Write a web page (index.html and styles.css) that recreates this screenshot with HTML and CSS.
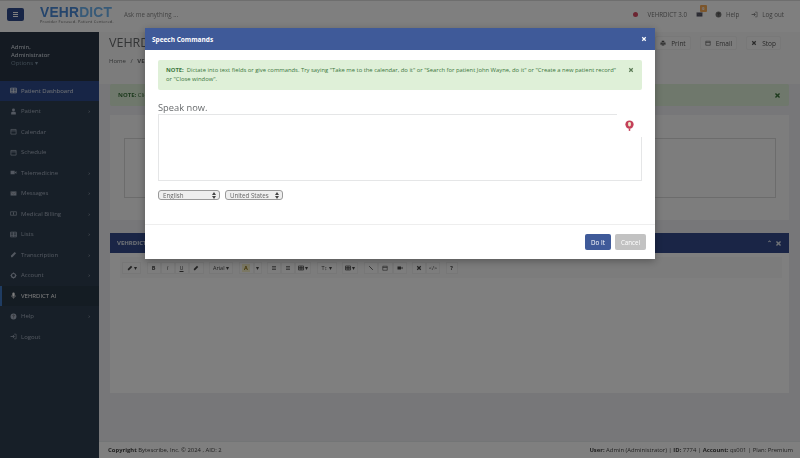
FILE: index.html
```html
<!DOCTYPE html>
<html lang="en">
<head>
  <meta charset="UTF-8">
  <meta name="viewport" content="width=device-width, initial-scale=1.0">
  <title>VEHRDICT</title>
  <link rel="stylesheet" href="styles.css">
</head>
<body>
  <svg class="defs" width="0" height="0">
    <symbol id="i-grid" viewBox="0 0 12 12"><path d="M1 2h10v8H1zM1 5h10M1 7.500h10M6 2v8" fill="none" stroke="currentColor" stroke-width="1.400"/></symbol>
    <symbol id="i-list" viewBox="0 0 12 12"><path d="M2 3h8M2 6h8M2 9h8" fill="none" stroke="currentColor" stroke-width="1.300"/></symbol>
    <symbol id="i-user" viewBox="0 0 12 12"><circle cx="6" cy="3.500" r="2.500" fill="currentColor"/><path d="M2 11V8.500Q2 6.500 4 6.500h4q2 0 2 2V11z" fill="currentColor"/></symbol>
    <symbol id="i-cal" viewBox="0 0 12 12"><path d="M1.500 2.500h9v8h-9zM1.500 5h9" fill="none" stroke="currentColor" stroke-width="1.200"/></symbol>
    <symbol id="i-video" viewBox="0 0 12 12"><path d="M1 3h7v6H1zM8.500 5.500 11 3.500v5L8.500 6.500z" fill="currentColor"/></symbol>
    <symbol id="i-mail" viewBox="0 0 12 12"><path d="M1 2.500h10v7H1z" fill="currentColor"/><path d="M1 3.500 6 7l5-3.500" fill="none" stroke="#777" stroke-width=".8"/></symbol>
    <symbol id="i-bill" viewBox="0 0 12 12"><path d="M1 3h10v6H1z" fill="none" stroke="currentColor" stroke-width="1.200"/><path d="M6 4v4" stroke="currentColor" stroke-width="1.600"/></symbol>
    <symbol id="i-pen" viewBox="0 0 12 12"><path d="M2 10.500 1.500 8 8 1.500 10.500 4 4 10.500z" fill="currentColor"/></symbol>
    <symbol id="i-link" viewBox="0 0 12 12"><path d="M2.500 2.500 5 5M7 7l2.500 2.500M4.500 4.500l3 3" fill="none" stroke="currentColor" stroke-width="1.800"/></symbol>
    <symbol id="i-gear" viewBox="0 0 12 12"><circle cx="6" cy="6" r="3.500" fill="none" stroke="currentColor" stroke-width="2"/><path d="M6 .8v2M6 9.200v2M.8 6h2M9.200 6h2" stroke="currentColor" stroke-width="1.400"/></symbol>
    <symbol id="i-mic" viewBox="0 0 12 12"><rect x="4" y="1" width="4" height="7" rx="2" fill="currentColor"/><path d="M2.500 6q0 3.300 3.500 3.300T9.500 6M6 9.300V11.500" fill="none" stroke="currentColor"/></symbol>
    <symbol id="i-help" viewBox="0 0 12 12"><circle cx="6" cy="6" r="5" fill="currentColor"/><path d="M4.500 4.800Q4.700 3.500 6 3.500t1.500 1.200Q7.500 5.500 6 6.300v.7M6 8v1" fill="none" stroke="#333" stroke-width="1"/></symbol>
    <symbol id="i-logout" viewBox="0 0 12 12"><path d="M1 6h6M5 3.500 7.500 6 5 8.500" fill="none" stroke="currentColor" stroke-width="1.400"/><path d="M7 2h3.500v8H7" fill="none" stroke="currentColor"/></symbol>
    <symbol id="i-x" viewBox="0 0 12 12"><path d="M2.500 2.500l7 7M9.500 2.500l-7 7" stroke="currentColor" stroke-width="2.400"/></symbol>
    <symbol id="i-print" viewBox="0 0 12 12"><path d="M1 5h10v4.500H9V7.500H3v2H1zM3.500 1.500h5V4h-5zM3.500 8.500h5V11h-5z" fill="currentColor"/></symbol>
  </svg>

  <header class="topbar">
    <button class="menu-btn"><span></span><span></span><span></span></button>
    <div class="logo">
      <div class="logo-name">VEHR<span>DICT</span></div>
      <div class="logo-tag">Provider Focused. Patient Centered.</div>
    </div>
    <div class="ask">Ask me anything ...</div>
    <nav class="top-links">
      <span class="dot"></span>
      <span class="top-link version">VEHRDICT 3.0</span>
      <span class="top-link mail"><svg class="ico"><use href="#i-mail"/></svg><b class="badge">0</b></span>
      <span class="top-link"><svg class="ico"><use href="#i-help"/></svg>Help</span>
      <span class="top-link"><svg class="ico"><use href="#i-logout"/></svg>Log out</span>
    </nav>
  </header>

  <div class="page">
    <aside class="sidebar">
      <div class="profile">
        <div>Admin,</div>
        <div>Administrator</div>
        <div class="options">Options ▾</div>
      </div>
      <ul class="nav">
        <li class="active"><svg class="ico"><use href="#i-grid"/></svg>Patient Dashboard</li>
        <li class="more"><svg class="ico"><use href="#i-user"/></svg>Patient</li>
        <li><svg class="ico"><use href="#i-cal"/></svg>Calendar</li>
        <li><svg class="ico"><use href="#i-cal"/></svg>Schedule</li>
        <li class="more"><svg class="ico"><use href="#i-video"/></svg>Telemedicine</li>
        <li class="more"><svg class="ico"><use href="#i-mail"/></svg>Messages</li>
        <li class="more"><svg class="ico"><use href="#i-bill"/></svg>Medical Billing</li>
        <li class="more"><svg class="ico"><use href="#i-grid"/></svg>Lists</li>
        <li class="more"><svg class="ico"><use href="#i-pen"/></svg>Transcription</li>
        <li class="more"><svg class="ico"><use href="#i-gear"/></svg>Account</li>
        <li class="current"><svg class="ico"><use href="#i-mic"/></svg>VEHRDICT AI</li>
        <li class="more"><svg class="ico"><use href="#i-help"/></svg>Help</li>
        <li><svg class="ico"><use href="#i-logout"/></svg>Logout</li>
      </ul>
    </aside>

    <main class="main">
      <section class="page-head">
        <div>
          <h1>VEHRDICT AI</h1>
          <div class="crumbs">Home <i>/</i> <b>VEHRDICT AI</b></div>
        </div>
        <div class="head-btns">
          <button><svg class="ico"><use href="#i-print"/></svg>Print</button>
          <button><svg class="ico"><use href="#i-cal"/></svg>Email</button>
          <button><svg class="ico"><use href="#i-x"/></svg>Stop</button>
        </div>
      </section>

      <div class="content">
        <div class="page-alert"><span><b>NOTE:</b> Click the microphone to begin.</span><svg class="ico"><use href="#i-x"/></svg></div>
        <div class="dict-box"><div class="dict-area"></div></div>

        <section class="panel">
          <div class="panel-head"><span>VEHRDICT AI</span><span class="panel-tools">⌃ <svg class="ico"><use href="#i-x"/></svg></span></div>
          <div class="panel-body">
            <div class="toolbar">
              <span class="tool t-19"><svg class="ico"><use href="#i-pen"/></svg>▾</span>
              <span class="tool-group">
                <span class="tool"><b>B</b></span><span class="tool"><i>I</i></span><span class="tool"><u>U</u></span><span class="tool t-15"><svg class="ico"><use href="#i-pen"/></svg></span>
              </span>
              <span class="tool t-24">Arial ▾</span>
              <span class="tool-group">
                <span class="tool color t-15"><b>A</b></span><span class="tool t-8">▾</span>
              </span>
              <span class="tool-group">
                <span class="tool"><svg class="ico"><use href="#i-list"/></svg></span><span class="tool"><svg class="ico"><use href="#i-list"/></svg></span><span class="tool t-16"><svg class="ico"><use href="#i-grid"/></svg>▾</span>
              </span>
              <span class="tool t-20">T↕ ▾</span>
              <span class="tool t-16"><svg class="ico"><use href="#i-grid"/></svg>▾</span>
              <span class="tool-group">
                <span class="tool"><svg class="ico"><use href="#i-link"/></svg></span><span class="tool t-15"><svg class="ico"><use href="#i-cal"/></svg></span><span class="tool"><svg class="ico"><use href="#i-video"/></svg></span>
              </span>
              <span class="tool-group">
                <span class="tool"><svg class="ico"><use href="#i-x"/></svg></span><span class="tool">&lt;/&gt;</span>
              </span>
              <span class="tool t-12"><b>?</b></span>
            </div>
          </div>
        </section>
      </div>

      <footer class="footer">
        <div><b>Copyright</b> Bytescribe, Inc. © 2024 , AID: 2</div>
        <div><b>User:</b> Admin (Administrator) | <b>ID:</b> 7774 | <b>Account:</b> qs001 | Plan: Premium</div>
      </footer>
    </main>
  </div>

  <div class="overlay">
    <div class="modal">
      <div class="modal-head"><span>Speech Commands</span><svg class="ico"><use href="#i-x"/></svg></div>
      <div class="modal-body">
        <div class="note">
          <p><b>NOTE:</b>&nbsp; Dictate into text fields or give commands. Try saying "Take me to the calendar, do it" or "Search for patient John Wayne, do it" or "Create a new patient record" or "Close window".</p>
          <svg class="ico"><use href="#i-x"/></svg>
        </div>
        <div class="speak">Speak now.</div>
        <div class="speech-area">
          <div class="mic-box"><svg viewBox="0 0 12 16" width="9" height="12"><circle cx="6" cy="6" r="5.500" fill="#c4405a"/><rect x="4.200" y="2.500" width="3.600" height="6" rx="1.800" fill="#eec"/><path d="M6 11.500v3" stroke="#c4405a" stroke-width="2"/></svg></div>
        </div>
        <div class="selects">
          <select class="sel-lang"><option>English</option></select>
          <select class="sel-country"><option>United States</option></select>
        </div>
      </div>
      <div class="modal-foot">
        <button class="btn-do">Do It</button>
        <button class="btn-cancel">Cancel</button>
      </div>
    </div>
  </div>
</body>
</html>
```

FILE: styles.css
```css
* {
  box-sizing: border-box;
}
html, body {
  height: 100%;
}
body {
  margin: 0;
  font-family: "Open Sans", sans-serif;
  font-size: 6px;
  color: #676a6c;
  background: #eeeef2;
  overflow: hidden;
  filter: blur(.35px);
}
.defs {
  position: absolute;
}
.ico {
  width: 7px;
  height: 7px;
  flex: none;
}

/* top bar */
.topbar {
  height: 32px;
  background: #fff;
  display: flex;
  align-items: center;
  padding: 0 16px 5px 7px;
  border-top: 1px solid #ddd;
}
.menu-btn {
  width: 17px;
  height: 13px;
  background: #2f4b8c;
  border: none;
  border-radius: 2px;
  padding: 0;
  display: flex;
  flex-direction: column;
  justify-content: center;
  align-items: center;
  gap: 1px;
}
.menu-btn span {
  width: 5px;
  height: 1px;
  background: #fff;
}
.logo {
  margin-left: 16px;
  width: 84px;
}
.logo-name {
  font-family: "Liberation Sans", sans-serif;
  font-weight: 700;
  font-size: 13.800px;
  line-height: 15px;
  color: #4a8ad8;
  letter-spacing: .2px;
}
.logo-name span {
  color: #6fb4f0;
}
.logo-tag {
  font-size: 3.900px;
  line-height: 4px;
  letter-spacing: .25px;
  color: #666;
  white-space: nowrap;
}
.ask {
  color: #888;
  font-size: 6.200px;
}
.top-links {
  margin-left: auto;
  display: flex;
  align-items: center;
  color: #777;
  font-size: 6.200px;
}
.dot {
  width: 5px;
  height: 5px;
  border-radius: 50%;
  background: #d84a64;
  margin-right: 10px;
}
.top-link {
  display: flex;
  align-items: center;
  gap: 4px;
  margin-left: 12px;
  position: relative;
}
.version {
  margin-left: 0;
}
.top-link.mail {
  margin-left: 9px;
}
.mail .ico {
  color: #556;
}
.badge {
  position: absolute;
  top: -6px;
  left: 4px;
  width: 7px;
  height: 7px;
  background: #f8ac59;
  color: #fff;
  font-size: 4px;
  line-height: 7px;
  text-align: center;
  border-radius: 1px;
}

/* sidebar */
.page {
  display: flex;
  height: calc(100% - 32px);
}
.sidebar {
  width: 99px;
  flex: none;
  background: #2f3f50;
  color: #dfe4ed;
}
.profile {
  height: 48.500px;
  padding: 11px 11px 0;
  line-height: 8px;
  background: #283544;
}
.options {
  color: #8095a8;
}
.nav {
  list-style: none;
  margin: 0;
  padding: 0;
}
.nav li {
  height: 20.500px;
  display: flex;
  align-items: center;
  gap: 4px;
  padding-left: 10px;
  color: #a7b1c2;
  position: relative;
}
.nav li.active {
  background: #2f4b8c;
  color: #dfe4ed;
}
.nav li.current {
  background: #293846;
  color: #fff;
  border-left: 2px solid #3f78c4;
  padding-left: 8px;
}
.nav li.more::after {
  content: "›";
  position: absolute;
  right: 9px;
}

/* main */
.main {
  flex: 1;
  min-width: 0;
  display: flex;
  flex-direction: column;
}
.page-head {
  height: 52px;
  background: #f8f8f8;
  padding: 2px 19px 0 10px;
  display: flex;
  justify-content: space-between;
  align-items: flex-start;
}
.page-head h1 {
  margin: 0;
  font-size: 12.500px;
  font-weight: 400;
  line-height: 17px;
}
.crumbs {
  margin-top: 6px;
}
.crumbs i {
  margin: 0 3px;
  font-style: normal;
}
.head-btns {
  display: flex;
  gap: 9px;
  margin-top: 2px;
}
.head-btns button {
  display: flex;
  align-items: center;
  gap: 5px;
  height: 14px;
  padding: 0 4px;
  background: #fbfbfb;
  border: 1px solid #f0f0f0;
  border-radius: 2px;
  font: 6.500px "Open Sans", sans-serif;
  color: #555;
}
.head-btns .ico {
  width: 6px;
  height: 6px;
}
.content {
  flex: 1;
  padding: 0 11px;
}
.page-alert {
  height: 22px;
  background: #dff0d8;
  color: #3c763d;
  display: flex;
  justify-content: space-between;
  align-items: center;
  padding: 0 8px;
  border-radius: 2px;
}
.dict-box {
  height: 105px;
  margin-top: 9px;
  background: #fafafa;
  padding: 23px 13px 0 14px;
}
.dict-area {
  height: 60px;
  border: 1px solid #d8d8d8;
}
.panel {
  margin-top: 13px;
}
.panel-head {
  height: 20px;
  background: #344b8c;
  color: #dfe4ed;
  font-weight: 700;
  display: flex;
  justify-content: space-between;
  align-items: center;
  padding: 0 7px;
}
.panel-tools {
  display: flex;
  gap: 3px;
  align-items: center;
}
.panel-body {
  height: 140px;
  background: #ffffff;
  padding: 4px 7px 0 10px;
}
.toolbar {
  height: 21px;
  background: #f8f8f8;
  padding: 0 0 0 2px;
  display: flex;
  gap: 5.500px;
  align-items: center;
}
.tool-group {
  display: flex;
}
.tool {
  height: 12px;
  width: 14px;
  border: 1px solid #eee;
  background: #fafafa;
  color: #444;
  display: inline-flex;
  align-items: center;
  justify-content: center;
  gap: 1px;
  white-space: nowrap;
  font-size: 5.500px;
}
.tool .ico {
  width: 6px;
  height: 6px;
}
.t-8 {
  width: 8px;
}
.t-12 {
  width: 12px;
}
.t-15 {
  width: 15px;
}
.t-16 {
  width: 16px;
}
.t-19 {
  width: 19px;
}
.t-20 {
  width: 20px;
}
.t-24 {
  width: 24px;
}
.tool.color b {
  color: #8a6d10;
  background: #f7f1c8;
  padding: 0 2px;
}
.footer {
  height: 17px;
  background: #fff;
  border-top: 1px solid #e7eaec;
  display: flex;
  justify-content: space-between;
  align-items: center;
  padding: 0 7px 0 9px;
  font-size: 5.900px;
  color: #444;
}

/* modal */
.overlay {
  position: fixed;
  inset: 0;
  background: rgba(0, 0, 0, .5);
  padding-top: 28px;
}
.modal {
  width: 510px;
  height: 231px;
  margin-left: 145px;
  background: #fff;
  box-shadow: 0 2px 8px rgba(0, 0, 0, .3);
  display: flex;
  flex-direction: column;
}
.modal-head {
  height: 22px;
  background: #3f5a99;
  color: #fff;
  font-weight: 700;
  font-size: 6.500px;
  display: flex;
  justify-content: space-between;
  align-items: center;
  padding: 0 8px 0 7px;
}
.modal-head .ico {
  width: 6px;
  height: 6px;
}
.modal-body {
  flex: 1;
  padding: 10px 13px 0;
}
.note {
  height: 30px;
  background: #dff0d8;
  color: #3c763d;
  border-radius: 2px;
  padding: 6px 8px;
  display: flex;
  justify-content: space-between;
  align-items: flex-start;
  line-height: 9px;
  font-size: 5.850px;
}
.note p {
  margin: 0;
  width: 452px;
}
.note .ico {
  width: 6px;
  height: 6px;
  margin: 1px 0 0;
  color: #5b7a55;
}
.speak {
  margin-top: 11px;
  font-size: 9.300px;
  line-height: 13px;
  color: #676a6c;
}
.speech-area {
  height: 67px;
  border: 1px solid #e5e6e7;
  position: relative;
}
.mic-box {
  position: absolute;
  top: -1px;
  right: -1px;
  width: 25px;
  height: 23px;
  background: #fff;
  display: flex;
  align-items: center;
  justify-content: center;
}
.selects {
  margin-top: 9px;
  display: flex;
  gap: 5px;
}
.selects select {
  appearance: none;
  height: 10px;
  padding: 0 4px;
  border: 1px solid #999;
  border-radius: 3px;
  font: 6.200px "Open Sans", sans-serif;
  color: #666;
  background: #eee url("data:image/svg+xml,%3Csvg xmlns='http://www.w3.org/2000/svg' width='4' height='7'%3E%3Cpath d='M2 0 4 3H0zM2 7 0 4h4z' fill='%23444'/%3E%3C/svg%3E") no-repeat right 3px center;
}
.sel-lang {
  width: 62px;
}
.sel-country {
  width: 58px;
}
.modal-foot {
  height: 35px;
  border-top: 1px solid #eee;
  display: flex;
  justify-content: flex-end;
  gap: 4px;
  padding: 9px 9px 0 0;
}
.modal-foot button {
  height: 16px;
  padding: 0;
  border: none;
  border-radius: 2px;
  color: #fff;
  white-space: nowrap;
  font: 6.200px "Open Sans", sans-serif;
}
.btn-do {
  width: 26px;
  background: #3f5a99;
}
.btn-cancel {
  width: 31px;
  background: #c2c2c2;
}
```
